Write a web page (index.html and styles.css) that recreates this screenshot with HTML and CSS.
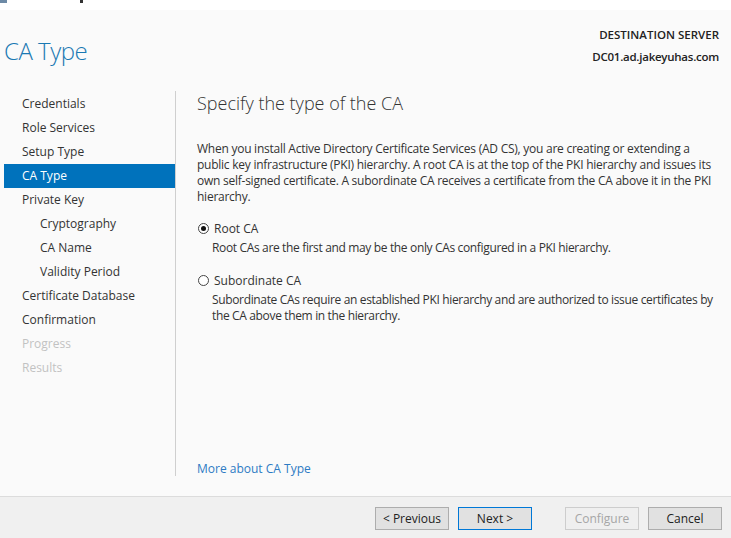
FILE: index.html
```html
<!DOCTYPE html>
<html>
<head>
<meta charset="utf-8">
<link rel="stylesheet" href="styles.css">
</head>
<body>
<div class="window">
  <div class="titlebar"><span class="tb-icon"></span><span class="tb-tail"></span></div>
  <div class="header">
    <h1 class="page-title">CA Type</h1>
    <div class="server">
      <div class="server-label">DESTINATION SERVER</div>
      <div class="server-name">DC01.ad.jakeyuhas.com</div>
    </div>
  </div>
  <div class="main">
    <nav class="nav">
      <div class="nav-item">Credentials</div>
      <div class="nav-item">Role Services</div>
      <div class="nav-item">Setup Type</div>
      <div class="nav-item active">CA Type</div>
      <div class="nav-item">Private Key</div>
      <div class="nav-item sub">Cryptography</div>
      <div class="nav-item sub">CA Name</div>
      <div class="nav-item sub">Validity Period</div>
      <div class="nav-item">Certificate Database</div>
      <div class="nav-item">Confirmation</div>
      <div class="nav-item disabled">Progress</div>
      <div class="nav-item disabled">Results</div>
    </nav>
    <section class="content">
      <h2 class="content-title">Specify the type of the CA</h2>
      <p class="intro">When you install Active Directory Certificate Services (AD CS), you are creating or extending a<br>public key infrastructure (PKI) hierarchy. A root CA is at the top of the PKI hierarchy and issues its<br>own self-signed certificate. A subordinate CA receives a certificate from the CA above it in the PKI<br>hierarchy.</p>
      <div class="option">
        <div class="option-head"><span class="radio checked"></span><span>Root CA</span></div>
        <div class="option-desc">Root CAs are the first and may be the only CAs configured in a PKI hierarchy.</div>
      </div>
      <div class="option">
        <div class="option-head"><span class="radio"></span><span>Subordinate CA</span></div>
        <div class="option-desc">Subordinate CAs require an established PKI hierarchy and are authorized to issue certificates by<br>the CA above them in the hierarchy.</div>
      </div>
      <div class="spacer"></div>
      <a class="more-link">More about CA Type</a>
    </section>
  </div>
  <div class="footer">
    <button class="btn">&lt; Previous</button>
    <button class="btn primary">Next &gt;</button>
    <button class="btn disabled gap">Configure</button>
    <button class="btn">Cancel</button>
  </div>
</div>
</body>
</html>
```
FILE: styles.css
```css
* { box-sizing: border-box; }
html, body { margin: 0; padding: 0; }
body {
  width: 731px;
  height: 538px;
  overflow: hidden;
  background: #fafafa;
  font-family: "Open Sans", "Noto Sans", sans-serif;
  font-size: 12px;
  color: #333;
}
.window { display: flex; flex-direction: column; height: 538px; }
.titlebar {
  height: 10px;
  background: #ffffff;
  display: flex;
}
.tb-icon { width: 7px; height: 3px; background: #6d8aa6; }
.tb-tail { width: 3px; height: 3px; background: #333; margin-left: 73px; }
.header {
  height: 81px;
  display: flex;
  justify-content: space-between;
  align-items: flex-start;
}
.page-title {
  margin: 23px 0 0 4px;
  font-size: 24px;
  font-weight: 300;
  letter-spacing: -0.5px;
  color: #1a79b3;
  line-height: 36px;
}
.server {
  text-align: right;
  padding: 14px 12px 0 0;
  font-weight: 600;
  font-size: 11.5px;
  color: #222;
  line-height: 21px;
}
.server-name { letter-spacing: -0.25px; margin-top: 1px; }
.main {
  display: flex;
  height: 385px;
}
.nav {
  width: 176px;
  border-right: 1px solid #cfcfcf;
  padding: 1px 0 0 4px;
  flex-shrink: 0;
}
.nav-item {
  height: 24px;
  line-height: 24px;
  padding-left: 18px;
  color: #333;
}
.nav-item.sub { padding-left: 36px; }
.nav-item.active { background: #0072bc; color: #fff; }
.nav-item.disabled { color: #c2c2c2; }
.content {
  flex: 1;
  padding: 0 0 0 21px;
  display: flex;
  flex-direction: column;
  white-space: nowrap;
}
.content-title {
  margin: 0;
  font-size: 18px;
  font-weight: 300;
  color: #333;
  line-height: 24px;
}
.intro {
  margin: 26px 0 0 0;
  line-height: 16px;
  letter-spacing: -0.25px;
}
.option { margin-top: 14px; }
.option + .option { margin-top: 15px; }
.option-head {
  display: flex;
  align-items: center;
  height: 18px;
}
.radio {
  width: 11px;
  height: 11px;
  border: 1px solid #444;
  border-radius: 50%;
  margin: 0 5px 0 1px;
  background: #fff;
  display: flex;
  align-items: center;
  justify-content: center;
}
.radio.checked::after {
  content: "";
  width: 5px;
  height: 5px;
  border-radius: 50%;
  background: #111;
}
.option-desc {
  padding-left: 15px;
  margin-top: 3px;
  line-height: 16px;
  letter-spacing: -0.35px;
}
.spacer { flex: 1; }
.more-link {
  color: #2d7bc4;
  line-height: 16px;
  margin-bottom: -1px;
}
.footer {
  margin-top: 20px;
  flex: 1;
  background: #f0f0f0;
  border-top: 1px solid #dcdcdc;
  display: flex;
  justify-content: flex-end;
  align-items: flex-start;
  padding: 10px 9px 0 0;
  gap: 9px;
}
.btn {
  width: 74px;
  height: 23px;
  background: #e1e1e1;
  border: 1px solid #adadad;
  font-family: "Open Sans", "Noto Sans", sans-serif;
  font-size: 12px;
  color: #222;
  padding: 0;
}
.btn.primary { border-color: #0078d7; }
.btn.disabled { background: #efefef; border-color: #cdcdcd; color: #a6a6a6; }
.btn.gap { margin-left: 24px; }
```
